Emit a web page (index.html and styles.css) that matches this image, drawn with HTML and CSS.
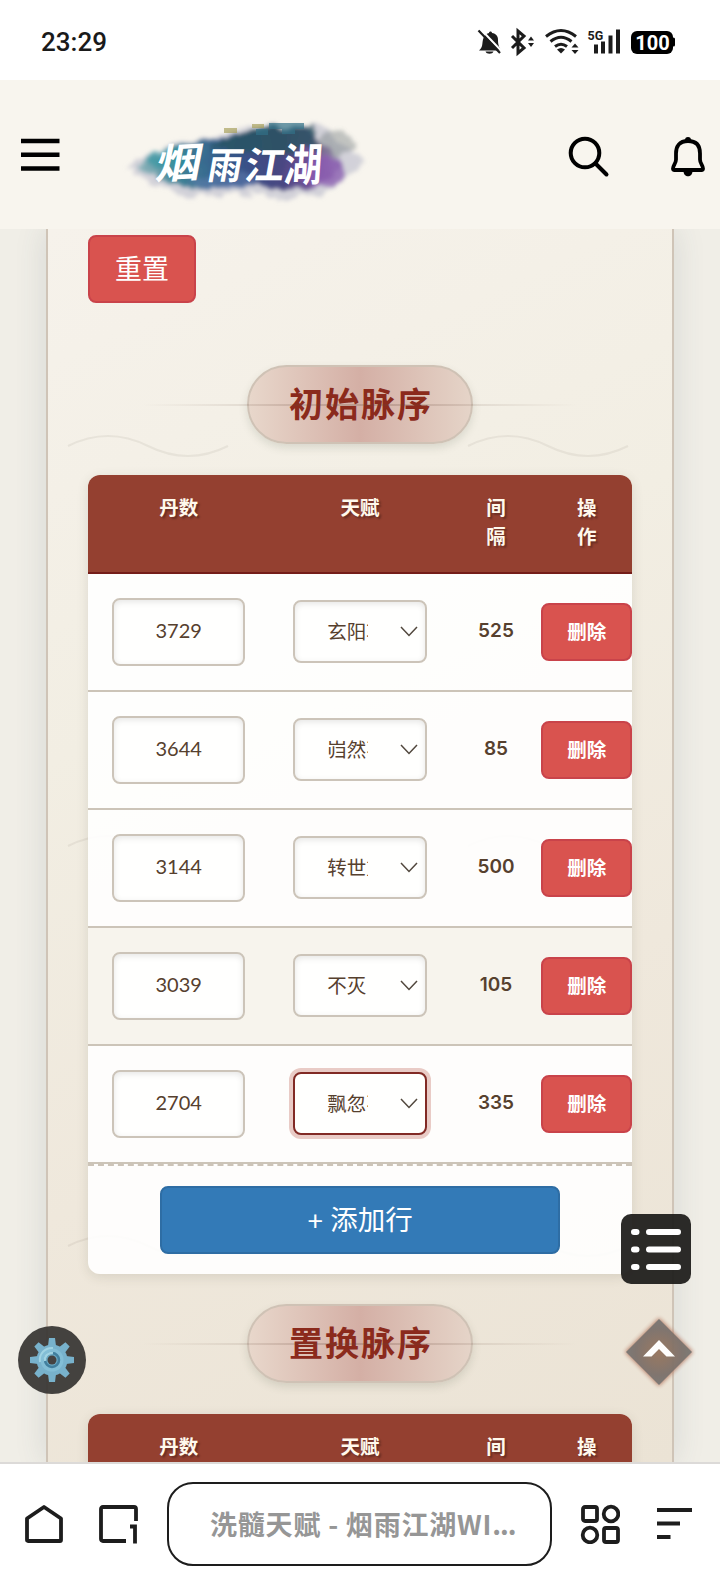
FILE: index.html
```html
<!DOCTYPE html>
<html lang="zh-CN">

<head>
    <meta charset="UTF-8">
    <meta name="viewport" content="width=device-width, initial-scale=1.0">
    <title>洗髓天赋 - 烟雨江湖WIKI</title>
    <link rel="stylesheet" href="styles.css">
</head>

<body>

    <div class="status-bar">
        <span class="clock">23:29</span>
        <svg class="status-icons" width="200" height="30" viewBox="0 0 200 30">
            <!-- muted bell -->
            <path d="M2 23.500c4-3 3-7 4-11 1-4 3-6 6-6.500 0-2 3-2 3 0 4 .5 6 3 6 7 0 5 1 7 3 10.500z" fill="#1c1c1c" />
            <path d="M8.500 24.500h8c-1 3-7 3-8 0z" fill="#1c1c1c" />
            <path d="M3.500 2l21 22" stroke="#fff" stroke-width="2" />
            <path d="M1.500 3.500l21.500 22.500" stroke="#1c1c1c" stroke-width="2.200" />
            <!-- bluetooth -->
            <path d="M35 9l12 12-6 5v-22l6 5-12 12" fill="none" stroke="#1c1c1c" stroke-width="3" />
            <path d="M51 13.500l3-4 3 4zM51 16l3 4 3-4z" fill="#1c1c1c" />
            <!-- wifi -->
            <path d="M69 9.500q15-12 30 0M73.500 14.500q10.500-8.500 21 0M78 19.500q6-4.500 12 0" fill="none" stroke="#1c1c1c" stroke-width="3" />
            <path d="M80 22.500q4-3 8 0l-4 4z" fill="#1c1c1c" />
            <path d="M94.500 20.500l3.500-4 3.500 4zM94.500 23l3.500 4 3.500-4z" fill="#1c1c1c" />
            <!-- signal -->
            <text class="net" x="110.500" y="12.500">5G</text>
            <path d="M119 26.500v-9M126 26.500v-12M133.500 26.500v-18M141 26.500v-24" stroke="#1c1c1c" stroke-width="4" />
            <!-- battery -->
            <rect x="154" y="4" width="42" height="23" rx="6" fill="#000" />
            <rect x="195" y="10.500" width="3" height="9" rx="1.500" fill="#000" />
            <text class="battery" x="175.500" y="22.500" text-anchor="middle">100</text>
        </svg>
    </div>

    <header class="site-header">
        <svg class="menu-icon" width="40" height="34" viewBox="0 0 40 34">
            <path d="M0 3h38.500M0 16.800h38.500M0 30.500h38.500" stroke="#000" stroke-width="4.600" />
        </svg>
        <svg class="logo" width="270" height="96" viewBox="0 0 270 96">
            <defs>
                <filter id="ink" x="-10%" y="-20%" width="120%" height="140%">
                    <feTurbulence type="fractalNoise" baseFrequency="0.070" numOctaves="4" seed="8" />
                    <feDisplacementMap in="SourceGraphic" scale="16" xChannelSelector="R" yChannelSelector="G" />
                    <feGaussianBlur stdDeviation="2.200" />
                </filter>
                <linearGradient id="wash">
                    <stop offset="0" stop-color="#9dbdc2" />
                    <stop offset=".2" stop-color="#3f8496" />
                    <stop offset=".45" stop-color="#33568a" />
                    <stop offset=".7" stop-color="#484681" />
                    <stop offset=".86" stop-color="#79539c" />
                    <stop offset="1" stop-color="#a9a0bd" />
                </linearGradient>
            </defs>
            <g filter="url(#ink)">
                <path d="M14 56Q48 34 92 31L134 17 210 16Q232 34 256 54 238 70 212 84L170 88 130 84 76 87Q40 76 14 56z" fill="#b2b5c6" opacity=".55" />
                <path d="M25 56Q48 40 94 33L140 20 198 18 224 42 234 55 214 71 192 79 128 76 90 79 46 71z" fill="url(#wash)" />
                <path d="M98 40L116 28 142 19 202 17 212 36 172 45z" fill="#28545f" opacity=".8" />
                <ellipse cx="214" cy="62" rx="22" ry="15" fill="#8a59b0" opacity=".75" />
                <ellipse cx="57" cy="49" rx="21" ry="10" fill="#2a95a1" opacity=".55" />
                <ellipse cx="113" cy="71" rx="35" ry="8" fill="#637eae" opacity=".55" />
                <ellipse cx="224" cy="35" rx="20" ry="12" fill="#6d777b" opacity=".4" />
            </g>
            <path d="M114 18h13v5h-13zM142 14h12v4h-12z" fill="#a59d55" opacity=".65" />
            <path d="M159 13h35v6h-9v5h-13v-5h-13zM146 19h12v6h-12z" fill="#327087" opacity=".7" />
            <g class="logo-text">
                <text transform="translate(44 69) rotate(-3) skewX(-14) scale(1.120 1)">烟</text>
                <text transform="translate(96 69) skewX(-10) scale(.840 .92)">雨</text>
                <text transform="translate(133 69) skewX(-10) scale(.970 .92)">江</text>
                <text transform="translate(173 71) skewX(-4) scale(.930 1.100)">湖</text>
            </g>
        </svg>
        <div class="header-actions">
            <svg width="42" height="42" viewBox="0 0 42 42" fill="none" stroke="#000" stroke-width="4" stroke-linecap="round">
                <circle cx="17" cy="17" r="14.300" />
                <path d="M27.500 27.500l11 11" />
            </svg>
            <svg width="36" height="42" viewBox="0 0 36 42">
                <path d="M18 5C9 5 6 10.500 6 17.500v6c0 4-3 6-3 9 0 1 .700 1.500 1.500 1.500h27c.800 0 1.500-.500 1.500-1.500 0-3-3-5-3-9v-6C30 10.500 27 5 18 5z" fill="none" stroke="#000" stroke-width="3.800" />
                <circle cx="18" cy="4" r="3" />
                <path d="M13.500 35h9c0 7-9 7-9 0z" />
            </svg>
        </div>
    </header>

    <main class="page">
        <div class="paper">
            <svg class="waves" width="624" height="1233" fill="none" stroke="#5c5046" stroke-opacity=".08" stroke-width="2">
                <path d="M20 217q40-20 80 0t80 0M420 217q40-20 80 0t80 0" />
                <path d="M20 617q40-20 80 0t80 0M420 617q40-20 80 0t80 0" />
                <path d="M20 1017q40-20 80 0t80 0M420 1017q40-20 80 0t80 0" />
            </svg>

            <button class="btn btn-danger reset">重置</button>

            <h2 class="section-title"><span>初始脉序</span></h2>

            <div class="table">
                <div class="thead">
                    <div>丹数</div>
                    <div>天赋</div>
                    <div>间<br>隔</div>
                    <div>操<br>作</div>
                </div>
                <div class="row">
                    <div class="cell"><input class="number" value="3729"></div>
                    <div class="cell">
                        <div class="select"><span>玄阳功</span><svg width="18" height="11"><path d="M1 1l8 8.500 8-8.500" /></svg></div>
                    </div>
                    <div class="gap">525</div>
                    <button class="btn btn-danger delete">删除</button>
                </div>
                <div class="row">
                    <div class="cell"><input class="number" value="3644"></div>
                    <div class="cell">
                        <div class="select"><span>岿然不动</span><svg width="18" height="11"><path d="M1 1l8 8.500 8-8.500" /></svg></div>
                    </div>
                    <div class="gap">85</div>
                    <button class="btn btn-danger delete">删除</button>
                </div>
                <div class="row">
                    <div class="cell"><input class="number" value="3144"></div>
                    <div class="cell">
                        <div class="select"><span>转世重</span><svg width="18" height="11"><path d="M1 1l8 8.500 8-8.500" /></svg></div>
                    </div>
                    <div class="gap">500</div>
                    <button class="btn btn-danger delete">删除</button>
                </div>
                <div class="row shaded">
                    <div class="cell"><input class="number" value="3039"></div>
                    <div class="cell">
                        <div class="select"><span>不灭</span><svg width="18" height="11"><path d="M1 1l8 8.500 8-8.500" /></svg></div>
                    </div>
                    <div class="gap">105</div>
                    <button class="btn btn-danger delete">删除</button>
                </div>
                <div class="row">
                    <div class="cell"><input class="number" value="2704"></div>
                    <div class="cell">
                        <div class="select focused"><span>飘忽不定</span><svg width="18" height="11"><path d="M1 1l8 8.500 8-8.500" /></svg></div>
                    </div>
                    <div class="gap">335</div>
                    <button class="btn btn-danger delete">删除</button>
                </div>
                <div class="tfoot">
                    <button class="btn btn-primary">+ 添加行</button>
                </div>
            </div>

            <h2 class="section-title second"><span>置换脉序</span></h2>

            <div class="table">
                <div class="thead">
                    <div>丹数</div>
                    <div>天赋</div>
                    <div>间<br>隔</div>
                    <div>操<br>作</div>
                </div>
            </div>
        </div>
    </main>

    <!-- Floating buttons -->
    <div class="fab toc">
        <svg width="70" height="70" viewBox="0 0 70 70" stroke="#fff" stroke-width="6" stroke-linecap="round">
            <path d="M13 18h2.500M28 18h29M13 35.500h2.500M28 35.500h29M13 53h2.500M28 53h29" />
        </svg>
    </div>
    <div class="fab settings">
        <svg width="68" height="68" viewBox="-34 -34 68 68">
            <g fill="#78b2cc">
                <circle r="15.500" />
                <g id="teeth">
                    <path d="M-4-14l1-8h6l1 8zM-4 14l1 8h6l1-8zM-14-4l-8 1v6l8 1zM14-4l8 1v6l-8 1z" />
                </g>
                <use href="#teeth" transform="rotate(45)" />
            </g>
            <circle r="11.500" fill="#83bed6" />
            <path d="M-12 2A12 12 0 0 1 1-12" fill="none" stroke="#a0d3e3" stroke-width="2" />
            <circle r="7" fill="#6baac4" stroke="#417f9e" stroke-width="2.500" />
            <path d="M-7 1A7 7 0 0 1 1-7" fill="none" stroke="#a0d3e3" stroke-width="2.500" />
            <circle r="4.500" fill="#454342" />
        </svg>
    </div>
    <div class="fab to-top">
        <svg width="76" height="76" viewBox="0 0 76 76">
            <defs>
                <radialGradient id="glow">
                    <stop offset="0" stop-color="#96745c" />
                    <stop offset=".7" stop-color="#7b706a" />
                    <stop offset="1" stop-color="#777471" />
                </radialGradient>
            </defs>
            <path class="halo" d="M38 4l34 34-34 34L4 38z" />
            <path d="M38 5l33 33-33 33L5 38z" fill="url(#glow)" />
            <path d="M22 42.500L38 26l16 16.500h-8.500L38 35l-7.500 7.500z" fill="#fff" />
        </svg>
    </div>

    <nav class="browser-bar">
        <svg width="40" height="40" viewBox="0 0 40 40" fill="none" stroke="#1d1d1d" stroke-width="3.800" stroke-linejoin="round">
            <path d="M3 14.500L20 3l17 11.500V36q0 1-1 1H4q-1 0-1-1z" />
        </svg>
        <svg class="tabs" width="40" height="40" viewBox="0 0 40 40" fill="none" stroke="#1d1d1d" stroke-width="3.800">
            <path d="M28 37H5q-2 0-2-2V5q0-2 2-2h31q2 0 2 2v12" />
            <path d="M32 22.500h5V39.500" />
        </svg>
        <div class="address">洗髓天赋 - 烟雨江湖WI<i>...</i></div>
        <svg class="apps" width="40" height="40" viewBox="0 0 40 40" fill="none" stroke="#1d1d1d" stroke-width="3.800">
            <rect x="3" y="3" width="14" height="14" rx="2" />
            <circle cx="31" cy="10" r="7.300" />
            <circle cx="10" cy="31" r="7.300" />
            <rect x="24" y="24" width="14" height="14" rx="2" />
        </svg>
        <svg class="menu" width="36" height="34" viewBox="0 0 36 34">
            <path d="M0 3h35M0 16.500h23M0 30h13.500" stroke="#1d1d1d" stroke-width="4" />
        </svg>
    </nav>

</body>

</html>
```

FILE: styles.css
```css
* {
    box-sizing: border-box;
}

body {
    margin: 0;
    width: 720px;
    height: 1584px;
    display: flex;
    flex-direction: column;
    position: relative;
    overflow: hidden;
    background: #f0eee7;
    color: #56402e;
    font-family: Lato, "Noto Sans CJK SC", sans-serif;
}

svg {
    display: block;
    flex: none;
}

/* Phone status bar */
.status-bar {
    height: 80px;
    flex: none;
    display: flex;
    align-items: center;
    justify-content: space-between;
    padding: 4px 43px 0 41px;
    background: #fff;
}

.clock {
    font: 500 26px Roboto, sans-serif;
    color: #1a1a1a;
}

.net {
    font: 700 12.500px Roboto, sans-serif;
    fill: #1c1c1c;
}

.battery {
    font: 700 20px Roboto, sans-serif;
    fill: #fff;
}

/* Site header */
.site-header {
    height: 149px;
    flex: none;
    display: flex;
    align-items: center;
    padding: 0 14px 0 21px;
    background: #f8f5ee;
}

.logo {
    margin-left: 49px;
    margin-top: 7px;
}

.logo-text {
    font: 700 41px "Noto Sans CJK SC", sans-serif;
    fill: #fff;
}

.header-actions {
    display: flex;
    gap: 60px;
    margin-left: auto;
    margin-top: 4px;
}

/* Content */
.page {
    height: 1233px;
    flex: none;
    overflow: hidden;
    padding: 0 46px;
}

.paper {
    position: relative;
    height: 1233px;
    padding: 6px 40px 0;
    border: solid #cfc4b7;
    border-width: 0 2px;
    background: linear-gradient(155deg, #f6f2eb 0%, #f2eee3 35%, #efe8dc 65%, #ebe3d5 100%);
    box-shadow: 0 0 30px rgba(60, 80, 90, 0.14);
}

.waves {
    position: absolute;
    left: 0;
    top: 0;
}

.btn {
    border: 2px solid;
    border-radius: 8px;
    color: #fff;
    font-family: Lato, "Noto Sans CJK SC", sans-serif;
    padding: 0 0 4px;
}

.btn-danger {
    background: #d9534f;
    border-color: #c9434a;
}

.btn-primary {
    width: 400px;
    height: 68px;
    background: #337ab7;
    border-color: #2e6da4;
    font-size: 27.500px;
}

.reset {
    position: relative;
    display: block;
    width: 108px;
    height: 68px;
    font-size: 27px;
}

.section-title {
    position: relative;
    display: flex;
    justify-content: center;
    margin: 62px 0 31px;
}

.section-title.second {
    margin-top: 30px;
}

.section-title span {
    width: 226px;
    height: 79px;
    padding-left: 2px;
    border: 2px solid #cfc2b5;
    border-radius: 40px;
    background: linear-gradient(90deg, #e8d7cb, #d4afa5 50%, #e5d4c8);
    box-shadow: 0 4px 8px rgba(70, 80, 60, 0.15);
    color: #8b2a1c;
    font-size: 34px;
    font-weight: 700;
    letter-spacing: 2px;
    line-height: 73px;
    text-align: center;
}

/* fading rule that runs through the title */
.section-title::after {
    content: '';
    position: absolute;
    left: 0;
    right: 0;
    top: 39px;
    height: 2px;
    background: linear-gradient(90deg, transparent 10%, rgba(100, 70, 55, 0.22) 45%, rgba(100, 70, 55, 0.22) 55%, transparent 90%);
}

.table {
    position: relative;
    border-radius: 12px;
    overflow: hidden;
    background: rgba(255, 255, 255, 0.9);
    box-shadow: 0 3px 12px rgba(60, 60, 40, 0.13);
}

.thead,
.row {
    display: grid;
    grid-template-columns: 2fr 2fr 1fr 1fr;
}

.thead {
    height: 99px;
    padding-top: 18px;
    background: #944030;
    border-bottom: 2px solid #741d19;
    color: #fff9ed;
    font-size: 19.5px;
    font-weight: 700;
    line-height: 29px;
    text-align: center;
    text-shadow: 2px 2px 2px rgba(0, 0, 0, 0.3);
}

.row {
    height: 118px;
    align-items: center;
    border-bottom: 2px solid #ccc4b8;
}

.row.shaded {
    background: #f7f4ed;
}

.cell {
    padding: 0 24px;
}

.number,
.select {
    width: 100%;
    border: 2px solid #ccc4b9;
    border-radius: 8px;
    background: #fffffe;
    box-shadow: inset 0 2px 6px rgba(0, 0, 0, 0.1);
    color: #56402e;
    font-size: 20px;
}

.number {
    display: block;
    height: 68px;
    padding: 0 0 4px;
    font-family: Lato, sans-serif;
    text-align: center;
}

.select {
    height: 63px;
    display: flex;
    align-items: center;
    justify-content: space-between;
    margin-bottom: 1px;
    padding: 0 7px 0 32px;
}

.select span {
    width: 41px;
    overflow: hidden;
    white-space: nowrap;
    font-size: 19.500px;
    line-height: 30px;
}

.select svg {
    fill: none;
    stroke: #51473d;
    stroke-width: 1.5;
}

.select.focused {
    border-color: #812a25;
    box-shadow: 0 0 0 4px #e9cbc6;
}

.gap {
    padding-bottom: 4px;
    font: 600 19px Inter, sans-serif;
    text-align: center;
}

.delete {
    height: 58px;
    font-size: 19.5px;
    font-weight: 700;
}

.tfoot {
    height: 110px;
    border-top: 2px dashed #ccc4b8;
    padding-top: 20px;
    text-align: center;
}

/* Floating buttons */
.fab {
    position: absolute;
}

.toc {
    left: 621px;
    top: 1214px;
    border-radius: 10px;
    background: rgba(31, 30, 28, 0.94);
}

.settings {
    left: 18px;
    top: 1326px;
    border-radius: 50%;
    background: rgba(55, 53, 51, 0.93);
}

.to-top {
    left: 621px;
    top: 1314px;
    opacity: 0.95;
}

.halo {
    fill: #b47860;
    filter: blur(2px);
}

/* Browser toolbar */
.browser-bar {
    height: 122px;
    flex: none;
    display: flex;
    align-items: center;
    padding: 0 0 0 24px;
    border-top: 2px solid #dcdad8;
    background: #fff;
}

.tabs {
    margin-left: 34px;
}

.address {
    width: 385px;
    height: 84px;
    margin-left: 29px;
    padding-left: 41px;
    border: 2px solid #1d1d1d;
    border-radius: 26px;
    color: #969696;
    font: 700 27px/79px "Noto Sans CJK SC", sans-serif;
    letter-spacing: 0.8px;
    white-space: nowrap;
}

.address i {
    font-style: normal;
    letter-spacing: -1px;
}

.apps {
    margin-left: 28px;
}

.menu {
    margin-left: 37px;
}
```
